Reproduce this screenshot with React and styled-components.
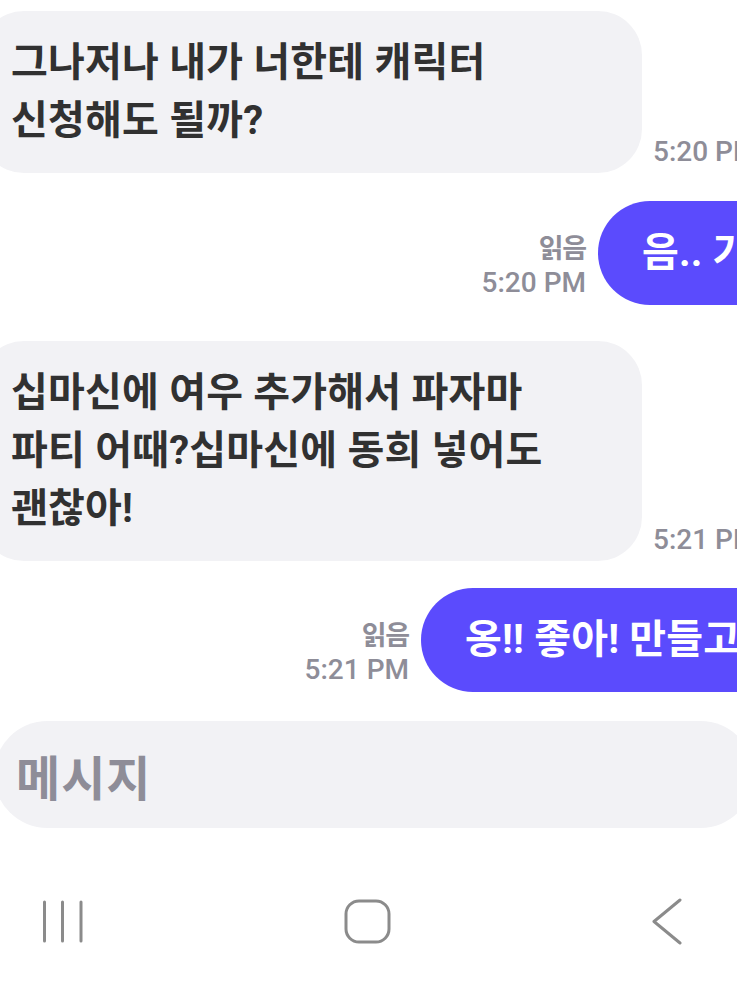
import React from "react";
import styled, { createGlobalStyle } from "styled-components";

const Global = createGlobalStyle`
  html, body { margin: 0; padding: 0; background: #ffffff; }
  body { font-family: Roboto, "Noto Sans CJK KR", sans-serif; }
`;

const Screen = styled.div`
  width: 737px;
  height: 983px;
  overflow: hidden;
  box-sizing: border-box;
  padding-top: 11px;
  display: flex;
  flex-direction: column;
  background: #ffffff;
`;

const Row = styled.div`
  display: flex;
  align-items: flex-end;
  flex-shrink: 0;
  margin-top: ${(p) => p.$top || 0}px;
  padding-left: ${(p) => p.$indent || 0}px;
`;

const InBubble = styled.div`
  flex-shrink: 0;
  box-sizing: border-box;
  width: 662px;
  margin-left: -20px;
  padding: 23px 10px 23px 31px;
  background: #f2f2f5;
  border-radius: 44px;
  color: #313131;
  font-family: Roboto, "Noto Sans CJK KR", sans-serif;
  font-weight: 700;
  font-size: 40px;
  line-height: 58px;
  letter-spacing: 0.2px;
  white-space: nowrap;
`;

const OutBubble = styled.div`
  flex-shrink: 0;
  box-sizing: border-box;
  padding: 23px 44px;
  background: #5b4bfd;
  border-radius: 52px;
  color: #ffffff;
  font-family: Roboto, "Noto Sans CJK KR", sans-serif;
  font-weight: 700;
  font-size: 40px;
  line-height: 58px;
  letter-spacing: 0.2px;
  white-space: nowrap;
`;

const Time = styled.div`
  color: #8e8d98;
  font-family: Roboto, "Noto Sans CJK KR", sans-serif;
  font-weight: 500;
  font-size: 28px;
  line-height: 36px;
  white-space: nowrap;
`;

const InTime = styled(Time)`
  margin-left: 11px;
  margin-bottom: 3px;
`;

const Meta = styled.div`
  flex-shrink: 0;
  width: 120px;
  margin-right: 12px;
  margin-bottom: 4px;
  display: flex;
  flex-direction: column;
  align-items: flex-end;
  text-align: right;
`;

const Read = styled.div`
  color: #8e8d98;
  font-family: "Noto Sans CJK KR", sans-serif;
  font-weight: 700;
  font-size: 27px;
  line-height: 36px;
  letter-spacing: -1.2px;
`;

const InputBar = styled.div`
  flex-shrink: 0;
  box-sizing: border-box;
  margin-top: 29px;
  margin-left: -6px;
  width: 760px;
  height: 107px;
  border-radius: 54px;
  background: #f2f2f5;
  padding-left: 22px;
  display: flex;
  align-items: center;
  color: #8e8d98;
  font-family: "Noto Sans CJK KR", sans-serif;
  font-weight: 700;
  font-size: 48px;
  letter-spacing: 1px;
`;

const NavBar = styled.div`
  flex-shrink: 0;
  margin-top: 71px;
  display: flex;
  justify-content: space-between;
  align-items: center;
  padding: 0 54px 0 42px;
  height: 45px;
`;

const NavIcon = styled.svg`
  display: block;
  fill: none;
  stroke: #8b8b8b;
  stroke-width: 3;
  stroke-linecap: round;
  stroke-linejoin: round;
`;

const Incoming = ({ top, lines, time }) => (
  <Row $top={top}>
    <InBubble>
      {lines.map((l, i) => (
        <div key={i}>{l}</div>
      ))}
    </InBubble>
    <InTime>{time}</InTime>
  </Row>
);

const Outgoing = ({ top, indent, text, time }) => (
  <Row $top={top} $indent={indent}>
    <Meta>
      <Read>읽음</Read>
      <Time>{time}</Time>
    </Meta>
    <OutBubble>{text}</OutBubble>
  </Row>
);

export default function App() {
  return (
    <>
      <Global />
      <Screen>
        <Incoming
          top={0}
          lines={["그나저나 내가 너한테 캐릭터", "신청해도 될까?"]}
          time="5:20 PM"
        />
        <Outgoing top={28} indent={466} text="음.. 가능해!" time="5:20 PM" />
        <Incoming
          top={36}
          lines={["십마신에 여우 추가해서 파자마", "파티 어때?십마신에 동희 넣어도", "괜찮아!"]}
          time="5:21 PM"
        />
        <Outgoing top={27} indent={289} text="옹!! 좋아! 만들고 올게!" time="5:21 PM" />
        <InputBar>메시지</InputBar>
        <NavBar>
          <NavIcon width="42" height="45" viewBox="0 0 42 45">
            <path d="M2.5 3v39M20.5 3v39M39 3v39" />
          </NavIcon>
          <NavIcon width="48" height="46" viewBox="0 0 48 46">
            <rect x="2" y="2" width="43" height="41" rx="13" />
          </NavIcon>
          <NavIcon width="32" height="47" viewBox="0 0 32 47">
            <path d="M29 2L3 23.5L29 45" />
          </NavIcon>
        </NavBar>
      </Screen>
    </>
  );
}
